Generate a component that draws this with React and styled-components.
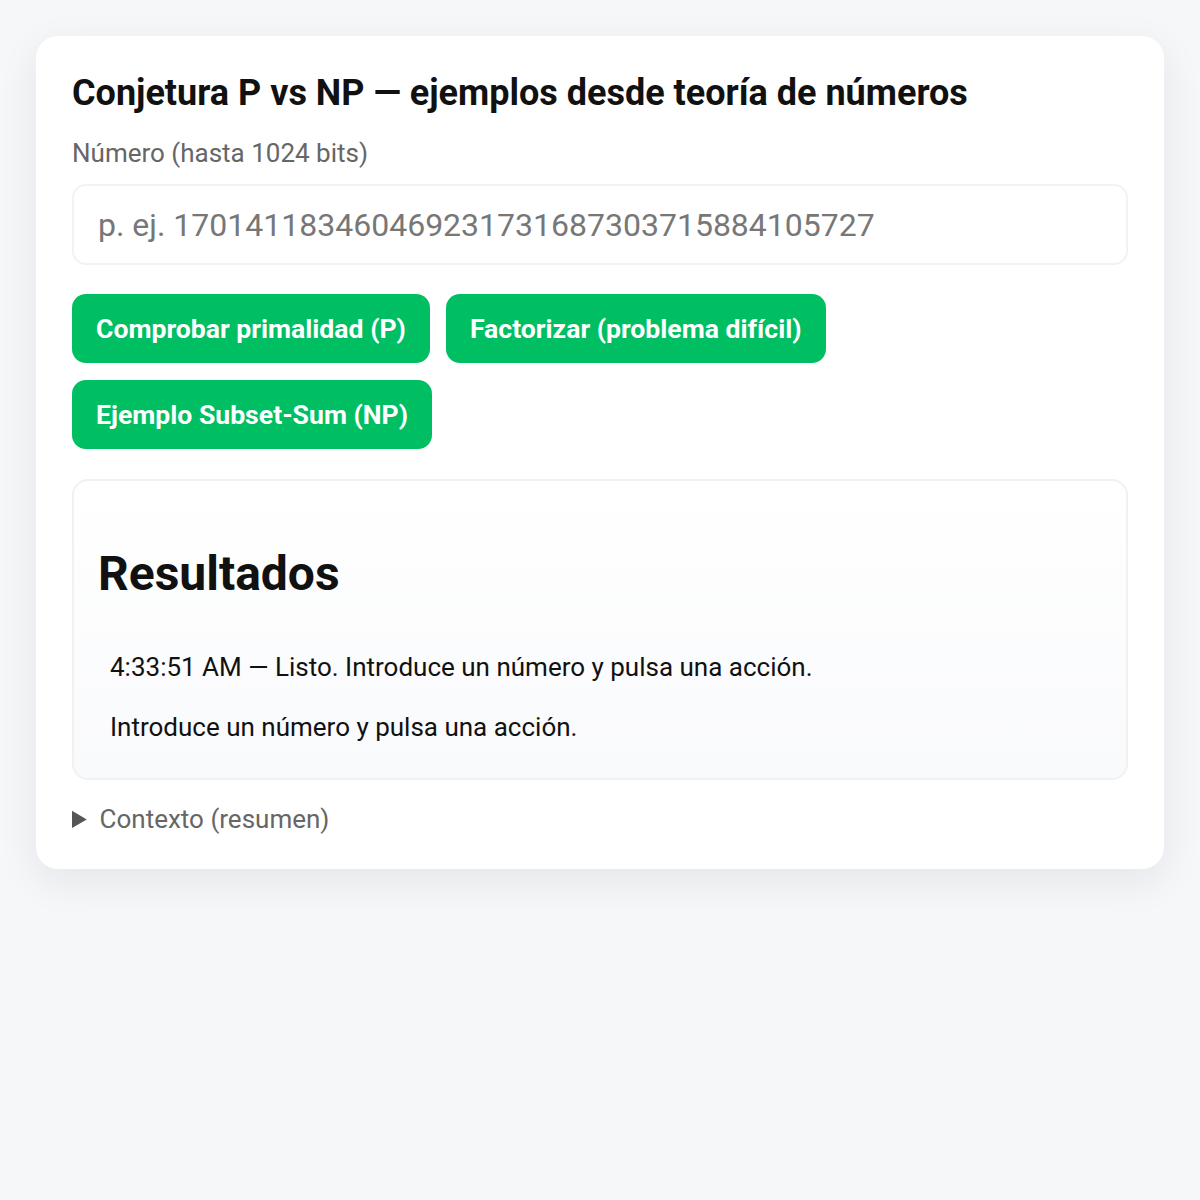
import React from 'react';
import styled, { createGlobalStyle } from 'styled-components';

const GlobalStyle = createGlobalStyle`
  html, body {
    margin: 0;
    padding: 0;
    background: #f6f7f9;
  }
  body {
    font-family: Roboto, "Liberation Sans", Arial, sans-serif;
    font-size: 26px;
    color: #111;
  }
  * {
    box-sizing: border-box;
  }
`;

const Page = styled.div`
  min-height: 1200px;
  padding: 36px;
`;

const Card = styled.div`
  background: #ffffff;
  border-radius: 22px;
  padding: 36px 36px 35px;
  box-shadow: 0 12px 40px rgba(20, 24, 40, 0.08);
`;

const Title = styled.h1`
  margin: 0 0 24px;
  font-size: 36px;
  font-weight: 700;
  line-height: 42px;
  color: #111;
`;

const Label = styled.label`
  display: block;
  font-size: 26px;
  line-height: 30px;
  color: #666;
  margin-bottom: 16px;
`;

const NumberInput = styled.input`
  display: block;
  width: 100%;
  height: 81px;
  padding: 0 24px;
  border: 2px solid #f1f2f3;
  border-radius: 14px;
  background: #fff;
  font-family: inherit;
  font-size: 32px;
  color: #111;
  outline: none;

  &::placeholder {
    color: #777;
  }
`;

const Actions = styled.div`
  display: flex;
  flex-wrap: wrap;
  gap: 17px 16px;
  margin-top: 29px;
`;

const ActionButton = styled.button`
  border: 0;
  border-radius: 14px;
  background: #00bf63;
  color: #fff;
  font-family: inherit;
  font-size: 26.6px;
  font-weight: 700;
  line-height: 29px;
  padding: 20px 24px;
  cursor: pointer;
`;

const Results = styled.section`
  margin-top: 30px;
  border: 2px solid #f0f1f3;
  border-radius: 16px;
  padding: 24px 24px 19px;
  background: linear-gradient(180deg, #ffffff 0%, #f9fafc 100%);
`;

const ResultsTitle = styled.h2`
  margin: 41px 0 34px;
  font-size: 48px;
  font-weight: 700;
  line-height: 56px;
  color: #111;
`;

const Log = styled.div`
  display: flex;
  flex-direction: column;
  gap: 21px;
  padding: 12px;
`;

const LogLine = styled.div`
  font-size: 26px;
  line-height: 39px;
  color: #111;
`;

const Context = styled.details`
  margin-top: 24px;
  color: #666;
`;

const ContextSummary = styled.summary`
  font-size: 26px;
  line-height: 30px;
  cursor: pointer;
  &::marker {
    color: #555;
  }
`;

export default function App() {
  return (
    <>
      <GlobalStyle />
      <Page>
        <Card>
          <Title>Conjetura P vs NP — ejemplos desde teoría de números</Title>
          <Label htmlFor="num">Número (hasta 1024 bits)</Label>
          <NumberInput
            id="num"
            placeholder="p. ej. 170141183460469231731687303715884105727"
          />
          <Actions>
            <ActionButton>Comprobar primalidad (P)</ActionButton>
            <ActionButton>Factorizar (problema difícil)</ActionButton>
            <ActionButton>Ejemplo Subset-Sum (NP)</ActionButton>
          </Actions>
          <Results>
            <ResultsTitle>Resultados</ResultsTitle>
            <Log>
              <LogLine>4:33:51 AM — Listo. Introduce un número y pulsa una acción.</LogLine>
              <LogLine>Introduce un número y pulsa una acción.</LogLine>
            </Log>
          </Results>
          <Context>
            <ContextSummary>Contexto (resumen)</ContextSummary>
          </Context>
        </Card>
      </Page>
    </>
  );
}
